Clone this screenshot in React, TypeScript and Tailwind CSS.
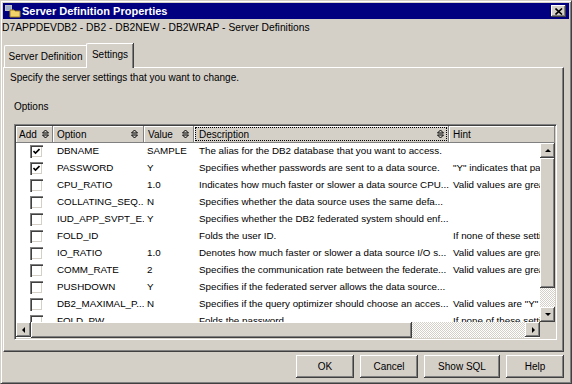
import React from "react";

type Row = { on: boolean; opt: string; val: string; desc: string; hint: string };

const rows: Row[] = [
  { on: true, opt: "DBNAME", val: "SAMPLE", desc: "The alias for the DB2 database that you want to access.", hint: "" },
  { on: true, opt: "PASSWORD", val: "Y", desc: "Specifies whether passwords are sent to a data source.", hint: "\"Y\" indicates that passwords are sent" },
  { on: false, opt: "CPU_RATIO", val: "1.0", desc: "Indicates how much faster or slower a data source CPU...", hint: "Valid values are greater than 0" },
  { on: false, opt: "COLLATING_SEQ...", val: "N", desc: "Specifies whether the data source uses the same defa...", hint: "" },
  { on: false, opt: "IUD_APP_SVPT_E...", val: "Y", desc: "Specifies whether the DB2 federated system should enf...", hint: "" },
  { on: false, opt: "FOLD_ID", val: "", desc: "Folds the user ID.", hint: "If none of these settings" },
  { on: false, opt: "IO_RATIO", val: "1.0", desc: "Denotes how much faster or slower a data source I/O s...", hint: "Valid values are greater than 0" },
  { on: false, opt: "COMM_RATE", val: "2", desc: "Specifies the communication rate between the federate...", hint: "Valid values are greater than 0" },
  { on: false, opt: "PUSHDOWN", val: "Y", desc: "Specifies if the federated server allows the data source...", hint: "" },
  { on: false, opt: "DB2_MAXIMAL_P...", val: "N", desc: "Specifies if the query optimizer should choose an acces...", hint: "Valid values are \"Y\" and \"N\"" },
  { on: false, opt: "FOLD_PW", val: "", desc: "Folds the password.", hint: "If none of these settings" },
];

const raised = "bg-[#d4d0c8] shadow-[inset_-1px_-1px_0_#404040,inset_1px_1px_0_#ffffff,inset_-2px_-2px_0_#808080]";

function SortArrow() {
  return (
    <svg width="7" height="10" viewBox="0 0 7 10" className="shrink-0">
      <path d="M0.5 4 L3.5 1 L6.5 4 Z M0.5 6 L3.5 9 L6.5 6 Z" fill="none" stroke="#000" strokeWidth="1" />
    </svg>
  );
}

function Arrow({ dir }: { dir: "up" | "down" | "left" | "right" }) {
  const d =
    dir === "up" ? "M1 5 L4 2 L7 5 Z" : dir === "down" ? "M1 2 L4 5 L7 2 Z" : dir === "left" ? "M5 1 L2 4 L5 7 Z" : "M3 1 L6 4 L3 7 Z";
  return (
    <div className={`w-[15px] h-[15px] flex items-center justify-center shrink-0 ${raised}`}>
      <svg width="8" height="8" viewBox="0 0 8 8">
        <path d={d} fill="#000" />
      </svg>
    </div>
  );
}

function Check({ on }: { on: boolean }) {
  return (
    <span className="w-[13px] h-[13px] bg-white flex items-center justify-center shadow-[inset_1px_1px_0_#808080,inset_2px_2px_0_#404040,inset_-1px_-1px_0_#ffffff,inset_-2px_-2px_0_#d4d0c8]">
      {on && (
        <svg width="7" height="7" viewBox="0 0 7 7">
          <path d="M0.5 3 L2.5 5 L6.5 1" fill="none" stroke="#000" strokeWidth="1.6" />
        </svg>
      )}
    </span>
  );
}

const dither =
  "bg-[image:repeating-conic-gradient(#ffffff_0_25%,#d4d0c8_0_50%)] bg-size-[2px_2px]";

export default function App() {
  return (
    <div className="w-[572px] h-[384px] bg-[#d4d0c8] border border-t-[#d4d0c8] border-l-[#d4d0c8] border-b-[#404040] border-r-[#404040] shadow-[inset_1px_1px_0_#ffffff,inset_-1px_-1px_0_#808080] p-[2px] flex flex-col font-['Liberation_Sans',Arial,sans-serif] text-[10px] text-black overflow-hidden">
      {/* title bar */}
      <div className="h-[16px] bg-[#000080] flex items-center pl-[2px] pr-[3px] shrink-0">
        <svg width="16" height="14" viewBox="0 0 16 14" className="shrink-0">
          <rect x="0.5" y="1.5" width="6" height="5" fill="#9fb0c8" stroke="#c0c0c0" />
          <path d="M5 6 H9 L10 7 H15 V13 H5 Z" fill="#f4d46a" stroke="#a08020" strokeWidth="1" />
        </svg>
        <span className="ml-px text-white font-bold text-[11px] leading-none">Server Definition Properties</span>
        <div className="ml-auto w-[15px] h-[12px] flex items-center justify-center bg-[#d4d0c8] shadow-[inset_-1px_-1px_0_#404040,inset_1px_1px_0_#ffffff,inset_-2px_-2px_0_#808080]">
          <svg width="8" height="7" viewBox="0 0 8 7">
            <path d="M0.5 0.5 L7 6.5 M7 0.5 L0.5 6.5" stroke="#000" strokeWidth="1.6" />
          </svg>
        </div>
      </div>

      {/* subtitle */}
      <div className="mt-[2px] h-[13px] leading-[13px] -ml-px whitespace-nowrap text-[10.3px]">
        D7APPDEVDB2 - DB2 - DB2NEW - DB2WRAP - Server Definitions
      </div>

      {/* tabs */}
      <div className="mt-[9px] h-[24px] flex items-end shrink-0 relative z-10">
        <div className="h-[22px] w-[82px] ml-px flex items-center justify-center border-t border-l border-white rounded-tl-[2px]">
          Server Definition
        </div>
        <div className="h-[25px] w-[47px] -mb-px flex items-center justify-center pb-[3px] bg-[#d4d0c8] border-t border-l border-white shadow-[inset_-1px_0_0_#808080,1px_0_0_#404040] rounded-tl-[2px]">
          Settings
        </div>
      </div>

      {/* panel */}
      <div className="h-[285px] mr-[5px] border-t border-l border-white border-b border-r border-b-[#404040] border-r-[#404040] shadow-[inset_-1px_-1px_0_#808080] flex flex-col shrink-0">
        <div className="mt-[4px] pl-[6px] h-[12px] leading-[12px] whitespace-nowrap">
          Specify the server settings that you want to change.
        </div>
        <div className="mt-[17px] pl-[10px] h-[12px] leading-[12px]">Options</div>

        {/* table */}
        <div className="mt-[11px] ml-[10px] w-[543px] h-[216px] border border-t-[#808080] border-l-[#808080] border-b-white border-r-white shadow-[inset_1px_1px_0_#404040,inset_-1px_-1px_0_#d4d0c8] p-px flex flex-col bg-white">
          {/* header */}
          <div className="flex h-[17px] shrink-0 bg-[#d4d0c8]">
            <div className="w-[37px] flex items-center justify-between pl-[3px] pr-[3px] border-r border-b border-[#808080] shadow-[inset_1px_1px_0_#ffffff]">
              <span>Add</span>
              <SortArrow />
            </div>
            <div className="w-[91px] flex items-center justify-between pl-[4px] pr-[5px] border-r border-b border-[#808080] shadow-[inset_1px_1px_0_#ffffff]">
              <span>Option</span>
              <SortArrow />
            </div>
            <div className="w-[50px] flex items-center justify-between pl-[4px] pr-[4px] border-r border-b border-[#808080] shadow-[inset_1px_1px_0_#ffffff]">
              <span>Value</span>
              <SortArrow />
            </div>
            <div className="w-[255px] flex p-px border-r border-b border-[#808080] shadow-[inset_1px_1px_0_#ffffff]">
              <div className="flex-1 flex items-center justify-between pl-[3px] pr-[2px] border border-dotted border-black">
                <span>Description</span>
                <SortArrow />
              </div>
            </div>
            <div className="flex-1 flex items-center pl-[4px] border-r border-b border-[#808080] shadow-[inset_1px_1px_0_#ffffff]">
              <span>Hint</span>
            </div>
          </div>

          {/* body */}
          <div className="h-[179px] flex shrink-0">
            <div className="w-[524px] overflow-hidden text-[9.8px]">
              {rows.map((r) => (
                <div key={r.opt} className="h-[17px] flex items-center whitespace-nowrap">
                  <div className="w-[37px] pl-[14px] shrink-0 flex items-center">
                    <Check on={r.on} />
                  </div>
                  <div className="w-[91px] pl-[4px] shrink-0 overflow-hidden">{r.opt}</div>
                  <div className="w-[50px] pl-[3px] shrink-0 overflow-hidden">{r.val}</div>
                  <div className="w-[255px] pl-[5px] shrink-0 overflow-hidden">{r.desc}</div>
                  <div className="w-[91px] pl-[4px] shrink-0 overflow-hidden">{r.hint}</div>
                </div>
              ))}
            </div>
            <div className="w-[15px] flex flex-col">
              <Arrow dir="up" />
              <div className={`h-[130px] ${raised}`} />
              <div className={`flex-1 ${dither}`} />
              <Arrow dir="down" />
            </div>
          </div>

          {/* horizontal scrollbar */}
          <div className="h-[16px] flex shrink-0">
            <div className="w-[524px] flex items-stretch">
              <Arrow dir="left" />
              <div className={`w-[381px] ${raised}`} />
              <div className={`flex-1 ${dither}`} />
              <Arrow dir="right" />
            </div>
            <div className="flex-1 bg-[#d4d0c8]" />
          </div>
        </div>
      </div>

      {/* buttons */}
      <div className="mt-[3px] h-[23px] flex justify-end gap-[6px] pr-[5px] shrink-0">
        {["OK", "Cancel", "Show SQL", "Help"].map((b) => (
          <div
            key={b}
            className={`${b === "Show SQL" ? "w-[76px]" : "w-[58px]"} flex items-center justify-center ${raised}`}
          >
            {b}
          </div>
        ))}
      </div>
    </div>
  );
}
